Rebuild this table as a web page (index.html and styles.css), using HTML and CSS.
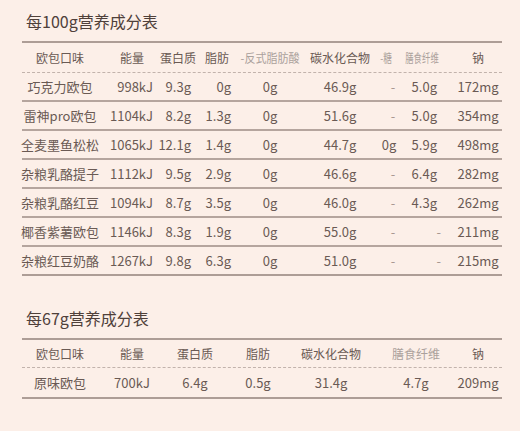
FILE: index.html
```html
<!DOCTYPE html>
<html lang="zh-CN">
<head>
<meta charset="utf-8">
<link rel="stylesheet" href="styles.css">
</head>
<body>
<div class="page">
  <h2 class="title">每100g营养成分表</h2>
  <div class="table t1">
    <div class="row head">
      <div class="c c1">欧包口味</div>
      <div class="c c2 hs">能量</div>
      <div class="c c3">蛋白质</div>
      <div class="c c4">脂肪</div>
      <div class="c c5 muted"><span class="sq sq5">-反式脂肪酸</span></div>
      <div class="c c6">碳水化合物</div>
      <div class="c c7 muted"><span class="sq sq7">-糖</span></div>
      <div class="c c8 muted"><span class="sq sq8">膳食纤维</span></div>
      <div class="c c9">钠</div>
    </div>
    <div class="row">
      <div class="c c1">巧克力欧包</div><div class="c c2 r">998kJ</div><div class="c c3 r">9.3g</div><div class="c c4 r">0g</div><div class="c c5">0g</div><div class="c c6">46.9g</div><div class="c c7 dash">-</div><div class="c c8 r">5.0g</div><div class="c c9">172mg</div>
    </div>
    <div class="row">
      <div class="c c1">雷神pro欧包</div><div class="c c2 r">1104kJ</div><div class="c c3 r">8.2g</div><div class="c c4 r">1.3g</div><div class="c c5">0g</div><div class="c c6">51.6g</div><div class="c c7 dash">-</div><div class="c c8 r">5.0g</div><div class="c c9">354mg</div>
    </div>
    <div class="row">
      <div class="c c1">全麦墨鱼松松</div><div class="c c2 r">1065kJ</div><div class="c c3 r">12.1g</div><div class="c c4 r">1.4g</div><div class="c c5">0g</div><div class="c c6">44.7g</div><div class="c c7">0g</div><div class="c c8 r">5.9g</div><div class="c c9">498mg</div>
    </div>
    <div class="row">
      <div class="c c1">杂粮乳酪提子</div><div class="c c2 r">1112kJ</div><div class="c c3 r">9.5g</div><div class="c c4 r">2.9g</div><div class="c c5">0g</div><div class="c c6">46.6g</div><div class="c c7 dash">-</div><div class="c c8 r">6.4g</div><div class="c c9">282mg</div>
    </div>
    <div class="row">
      <div class="c c1">杂粮乳酪红豆</div><div class="c c2 r">1094kJ</div><div class="c c3 r">8.7g</div><div class="c c4 r">3.5g</div><div class="c c5">0g</div><div class="c c6">46.0g</div><div class="c c7 dash">-</div><div class="c c8 r">4.3g</div><div class="c c9">262mg</div>
    </div>
    <div class="row">
      <div class="c c1">椰香紫薯欧包</div><div class="c c2 r">1146kJ</div><div class="c c3 r">8.3g</div><div class="c c4 r">1.9g</div><div class="c c5">0g</div><div class="c c6">55.0g</div><div class="c c7 dash">-</div><div class="c c8 r dash">-</div><div class="c c9">211mg</div>
    </div>
    <div class="row last">
      <div class="c c1">杂粮红豆奶酪</div><div class="c c2 r">1267kJ</div><div class="c c3 r">9.8g</div><div class="c c4 r">6.3g</div><div class="c c5">0g</div><div class="c c6">51.0g</div><div class="c c7 dash">-</div><div class="c c8 r dash">-</div><div class="c c9">215mg</div>
    </div>
  </div>

  <h2 class="title second">每67g营养成分表</h2>
  <div class="table t2">
    <div class="row head">
      <div class="c">欧包口味</div>
      <div class="c">能量</div>
      <div class="c">蛋白质</div>
      <div class="c">脂肪</div>
      <div class="c">碳水化合物</div>
      <div class="c muted">膳食纤维</div>
      <div class="c">钠</div>
    </div>
    <div class="row last">
      <div class="c">原味欧包</div>
      <div class="c">700kJ</div>
      <div class="c">6.4g</div>
      <div class="c">0.5g</div>
      <div class="c">31.4g</div>
      <div class="c">4.7g</div>
      <div class="c">209mg</div>
    </div>
  </div>
</div>
</body>
</html>
```
FILE: styles.css
```css
html, body {
  margin: 0;
  padding: 0;
  background: #fcefe8;
}
body {
  width: 520px;
  height: 431px;
  overflow: hidden;
  font-family: "Noto Sans CJK SC", "Noto Sans", sans-serif;
  color: #6a5a54;
}
.page {
  padding: 9px 18px 0 22px;
}
.title {
  margin: 0 0 8px 0;
  padding-left: 4px;
  font-size: 16px;
  line-height: 24px;
  font-weight: 400;
  color: #4f403a;
}
.title.second {
  margin-top: 30px;
}
.table {
  width: 480px;
  border-top: 2px solid #ad9d96;
}
.row {
  display: grid;
  align-items: center;
  border-bottom: 2px solid #b5a59e;
  font-size: 13px;
  height: 27px;
}
.row.head {
  font-size: 12px;
  height: 29px;
  border-bottom: 1px dashed #c2b3ac;
  color: #6a5a54;
}
.row.last {
  border-bottom: 2px solid #ad9d96;
}
.t1 .row {
  grid-template-columns: 76px 62px 36px 42px 64px 76px 22px 44px 58px;
}
.t2 .row {
  grid-template-columns: 76px 68px 58px 68px 78px 92px 40px;
}
.t2 .row.head {
  height: 27px;
}
.t2 .row.last {
  padding-top: 1px;
  box-sizing: border-box;
  height: 31px;
}
.c {
  display: flex;
  justify-content: center;
  white-space: nowrap;
  line-height: 18px;
}
.c.r {
  justify-content: flex-end;
}
.c2.r { padding-right: 7px; }
.c3.r { padding-right: 5px; }
.c4.r { padding-right: 7px; }
.c8.r { padding-right: 7px; }
.c8.r.dash { padding-right: 3px; }
.c7.dash { padding-left: 8px; }
.c2.hs { padding-left: 6px; }
.c9 { padding-left: 10px; }
.t2 .c:last-child { padding-right: 8px; }
.sq {
  display: inline-block;
}
.sq5 { transform: scaleX(0.92); }
.sq7 { transform: scaleX(0.72); margin-left: -6px; }
.sq8 { transform: scaleX(0.7); }
.muted {
  color: #aba19c;
}
.dash {
  color: #a89891;
}
```
